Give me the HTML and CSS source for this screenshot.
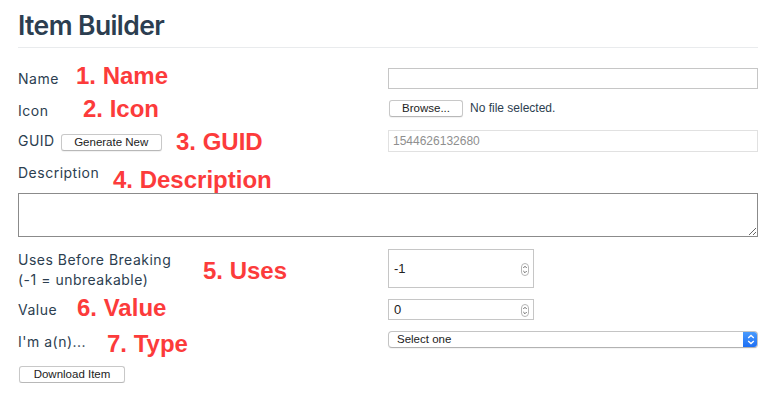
FILE: index.html
```html
<!DOCTYPE html>
<html lang="en">
<head>
<meta charset="utf-8">
<title>Item Builder</title>
<link rel="stylesheet" href="styles.css">
</head>
<body>
<div class="page">
  <h1 class="title">Item Builder</h1>
  <form class="form">
    <div class="row row-name">
      <div class="label">Name<span class="note note-name">1. Name</span></div>
      <div class="field"><input class="text-input" type="text"></div>
    </div>
    <div class="row row-icon">
      <div class="label">Icon<span class="note note-icon">2. Icon</span></div>
      <div class="field file-field">
        <button class="btn btn-browse" type="button">Browse...</button>
        <span class="file-status">No file selected.</span>
      </div>
    </div>
    <div class="row row-guid">
      <div class="label label-guid"><span>GUID</span><button class="btn btn-generate" type="button">Generate New</button><span class="note note-guid">3. GUID</span></div>
      <div class="field"><input class="text-input guid-input" type="text" value="1544626132680" disabled></div>
    </div>
    <div class="row row-desc">
      <div class="label">Description<span class="note note-desc">4. Description</span></div>
    </div>
    <textarea class="desc-input"></textarea>
    <div class="row row-uses">
      <div class="label">Uses Before Breaking<br>(-1 = unbreakable)<span class="note note-uses">5. Uses</span></div>
      <div class="field">
        <div class="number-input number-tall">
          <span class="number-value">-1</span>
          <svg class="spinner" width="8" height="13" viewBox="0 0 8 13"><rect x="0.5" y="0.5" width="7" height="12" rx="3.5" fill="#fff" stroke="#b5b5b5"/><path d="M2.3 5 L4 3.3 L5.7 5" fill="none" stroke="#555" stroke-width="0.9"/><path d="M2.3 8 L4 9.7 L5.7 8" fill="none" stroke="#555" stroke-width="0.9"/></svg>
        </div>
      </div>
    </div>
    <div class="row row-value">
      <div class="label">Value<span class="note note-value">6. Value</span></div>
      <div class="field">
        <div class="number-input">
          <span class="number-value">0</span>
          <svg class="spinner" width="8" height="13" viewBox="0 0 8 13"><rect x="0.5" y="0.5" width="7" height="12" rx="3.5" fill="#fff" stroke="#b5b5b5"/><path d="M2.3 5 L4 3.3 L5.7 5" fill="none" stroke="#555" stroke-width="0.9"/><path d="M2.3 8 L4 9.7 L5.7 8" fill="none" stroke="#555" stroke-width="0.9"/></svg>
        </div>
      </div>
    </div>
    <div class="row row-type">
      <div class="label">I'm a(n)...<span class="note note-type">7. Type</span></div>
      <div class="field">
        <div class="select">
          <span class="select-text">Select one</span>
          <span class="select-arrow"><svg width="8" height="11" viewBox="0 0 8 11"><path d="M1.2 4 L4 1.4 L6.8 4" fill="none" stroke="#fff" stroke-width="1.3"/><path d="M1.2 7 L4 9.6 L6.8 7" fill="none" stroke="#fff" stroke-width="1.3"/></svg></span>
        </div>
      </div>
    </div>
    <div class="actions">
      <button class="btn btn-download" type="button">Download Item</button>
    </div>
  </form>
</div>
</body>
</html>
```
FILE: styles.css
```css
* { box-sizing: border-box; }

body {
  margin: 0;
  background: #fff;
  color: #2c3e50;
  font-family: "Inter", "Liberation Sans", sans-serif;
}

.page {
  width: 758px;
  padding-left: 18px;
}

.title {
  margin: 8px 0 0;
  padding-bottom: 5px;
  font-size: 26.5px;
  line-height: 34px;
  font-weight: 600;
  letter-spacing: -0.6px;
  border-bottom: 1px solid #e9ebed;
}

.form {
  display: flex;
  flex-direction: column;
  gap: 10px;
  margin-top: 20px;
}

.row {
  display: grid;
  grid-template-columns: 370px 370px;
  align-items: start;
}

.row-name { height: 22px; }
.row-icon { height: 20px; }
.row-guid { height: 22px; }
.row-desc { height: 21px; }
.row-uses { height: 40px; }
.row-value { height: 22px; }
.row-type { height: 25px; }

.label {
  position: relative;
  display: block;
  padding-top: 1px;
  font-size: 14px;
  line-height: 20px;
  letter-spacing: 0.5px;
}

.label-guid {
  display: flex;
  align-items: flex-start;
  gap: 6px;
}

.note {
  position: absolute;
  font-family: "Liberation Sans", Arial, sans-serif;
  font-weight: 700;
  font-size: 24px;
  line-height: 24px;
  letter-spacing: 0;
  color: #fc3b3b;
  white-space: nowrap;
}

.note-name { left: 58px; top: -4px; }
.note-icon { left: 65px; top: -3px; }
.note-guid { left: 158px; top: 0px; }
.note-desc { left: 95px; top: 6px; }
.note-uses { left: 185px; top: 10px; }
.note-value { left: 59px; top: -3px; }
.note-type { left: 89px; top: 1px; }

.field {
  display: flex;
  align-items: center;
}

.text-input {
  width: 370px;
  height: 21px;
  margin: 0;
  border: 1px solid #c6c6c6;
  border-radius: 0;
  background: #fff;
  padding: 0 4px;
  font-family: "Liberation Sans", Arial, sans-serif;
  font-size: 12px;
  letter-spacing: 0;
  color: #222;
  outline: none;
}

.guid-input {
  height: 22px;
  border-color: #e1e1e1;
  color: #8f8f8f;
  background: #fff;
}

.btn {
  height: 17px;
  margin: 0;
  padding: 0 8px;
  background: #fff;
  border: 1px solid #c8c8c8;
  border-bottom-color: #b8b8b8;
  border-radius: 3px;
  box-shadow: 0 1px 1px rgba(0, 0, 0, 0.06);
  font-family: "Liberation Sans", Arial, sans-serif;
  font-size: 11.5px;
  line-height: 15px;
  letter-spacing: 0;
  color: #222;
}

.file-field {
  gap: 7px;
  margin-left: 1px;
}

.btn-browse { width: 74px; }

.file-status {
  font-family: "Liberation Sans", Arial, sans-serif;
  font-size: 12px;
  line-height: 17px;
  color: #2c3e50;
}

.btn-generate {
  width: 101px;
  margin-top: 3px;
}

.desc-input {
  display: block;
  width: 740px;
  height: 44px;
  margin: 0 0 2px;
  border: 1px solid #8b8b8b;
  border-radius: 0;
  background: #fff;
  outline: none;
}

.number-input {
  display: flex;
  align-items: center;
  justify-content: space-between;
  width: 146px;
  height: 21px;
  padding: 0 4px 0 5px;
  border: 1px solid #c6c6c6;
  background: #fff;
  font-family: "Liberation Sans", Arial, sans-serif;
  font-size: 13px;
  color: #222;
}

.number-tall { height: 39px; }

.spinner { display: block; margin-top: 1px; }

.select {
  display: flex;
  align-items: stretch;
  width: 370px;
  height: 17px;
  border: 1px solid #c4c4c4;
  border-bottom-color: #b2b2b2;
  border-radius: 4px;
  background: #fff;
  overflow: hidden;
  box-shadow: 0 1px 1px rgba(0, 0, 0, 0.05);
}

.select-text {
  flex: 1;
  padding-left: 8px;
  font-family: "Liberation Sans", Arial, sans-serif;
  font-size: 11.5px;
  line-height: 15px;
  color: #222;
}

.select-arrow {
  display: flex;
  align-items: center;
  justify-content: center;
  width: 15px;
  margin: -1px -1px -1px 0;
  background: linear-gradient(#4c9dfc, #1a6cf4);
  border-radius: 0 4px 4px 0;
}

.actions {
  display: flex;
  padding-left: 1px;
}

.btn-download { width: 106px; }
```
